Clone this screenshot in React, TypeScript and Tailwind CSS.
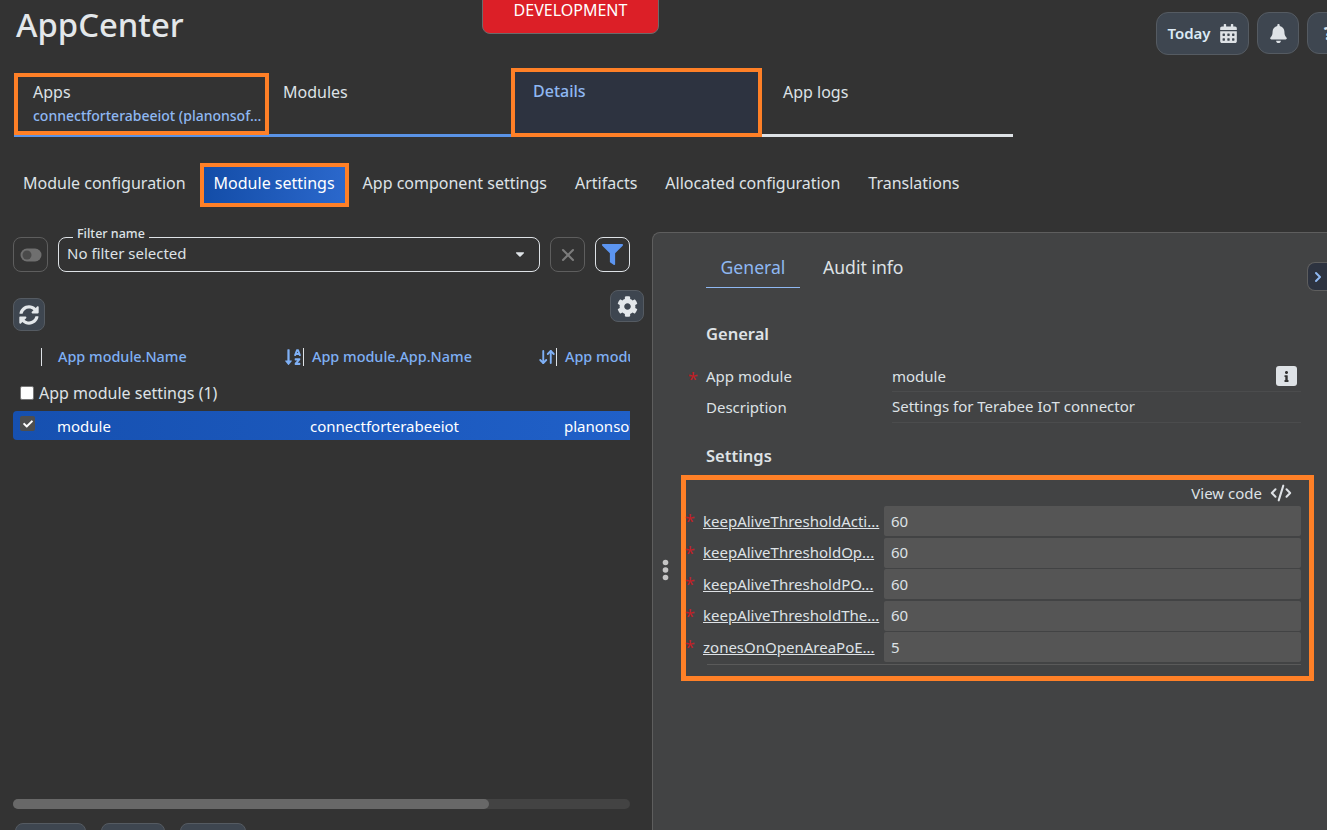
import React from 'react';
import { ArrowDownUp, ChevronRight, CodeXml, X } from 'lucide-react';
import { FaBell, FaCalendarAlt, FaCog, FaFilter, FaSyncAlt, FaInfo, FaCaretDown, FaCheck, FaSortAlphaDown } from 'react-icons/fa';

const settings = [
  { name: 'keepAliveThresholdActi...', value: '60' },
  { name: 'keepAliveThresholdOp...', value: '60' },
  { name: 'keepAliveThresholdPO...', value: '60' },
  { name: 'keepAliveThresholdThe...', value: '60' },
  { name: 'zonesOnOpenAreaPoE...', value: '5' },
];

const subTabs = ['App component settings', 'Artifacts', 'Allocated configuration', 'Translations'];

const App: React.FC = () => {
  return (
    <div className="relative h-[830px] w-[1327px] overflow-hidden bg-[#333333] font-['Noto_Sans',sans-serif] text-[#dee2e6]">
      {/* Environment badge */}
      <div className="absolute left-[482px] top-[-10px] flex h-[44px] w-[177px] items-end justify-center rounded-lg border border-[#6b6b6b] bg-[#dc1f27] pb-[13px] text-base leading-5 text-white">
        DEVELOPMENT
      </div>

      {/* Header */}
      <div className="flex h-[68px] items-start justify-between pl-4">
        <h1 className="mt-[3px] text-[32.8px] font-medium leading-[44px] text-[#e3e7ea]">AppCenter</h1>
        <div className="mr-[-22px] mt-3 flex items-start gap-2">
          <button className="flex h-[43px] w-[93px] items-center justify-center gap-2 rounded-xl border border-[#555b62] bg-[#3e4650] text-[15px] font-semibold text-[#dbeaf5]">
            Today
            <FaCalendarAlt size={19} color="#dee2e6" />
          </button>
          <button className="flex h-[42px] w-[42px] items-center justify-center rounded-xl border border-[#555b62] bg-[#3e4650]">
            <FaBell size={19} color="#dee2e6" />
          </button>
          <button className="flex h-[42px] w-[42px] items-center justify-center rounded-xl border border-[#555b62] bg-[#3e4650] text-lg font-bold text-[#dee2e6]">
            ?
          </button>
        </div>
      </div>

      {/* Main tabs */}
      <div className="ml-[14px] flex h-[69px] w-[999px] items-stretch">
        <div className="flex w-[497px] border-b-[3px] border-[#5a93e6]">
          <div className="mb-[-1px] mt-[5px] w-[255px] border-4 border-[#ff8027] pl-[15px] pt-[3px]">
            <div className="text-base leading-6 text-[#dee2e6]">Apps</div>
            <div className="whitespace-nowrap text-sm font-medium leading-[24px] text-[#8fb8f2]">connectforterabeeiot (planonsof...</div>
          </div>
          <div className="pl-[14px] pt-[12px] text-base leading-6 text-[#dee2e6]">Modules</div>
        </div>
        <div className="w-[251px] border-4 border-[#ff8027] bg-[#2d3340] px-[18px] pt-[7px] text-base font-medium leading-6 text-[#8fb8f2]">
          Details
        </div>
        <div className="flex-1 border-b-[3px] border-[#dee2e6] pl-[21px] pt-[12px] text-base leading-6 text-[#dee2e6]">
          App logs
        </div>
      </div>

      {/* Sub tabs */}
      <div className="ml-[23px] mt-[26px] flex h-[44px] items-center text-base text-[#dee2e6]">
        <span className="pb-1">Module configuration</span>
        <span className="ml-[14px] flex h-[44px] w-[149px] items-center justify-center border-4 border-[#ff8027] bg-gradient-to-r from-[#134da8] to-[#2b68cc] pb-1 text-white">
          Module settings
        </span>
        {subTabs.map((tab, i) => (
          <span key={tab} className={i === 0 ? 'ml-[14px] pb-1' : 'ml-[28px] pb-1'}>{tab}</span>
        ))}
      </div>

      <div className="mt-[25px] flex">
        {/* List column */}
        <div className="ml-[13px] flex w-[617px] flex-col">
          {/* Filter bar */}
          <div className="mt-[5px] flex w-[617px] items-start">
            <button className="flex h-[35px] w-[35px] items-center justify-center rounded-lg border border-[#5e5e5e]">
              <svg width="22" height="14" viewBox="0 0 22 14">
                <rect x="0.5" y="0.5" width="21" height="13" rx="6.5" fill="#6f6f6f" />
                <circle cx="7" cy="7" r="4.5" fill="#4a4a4a" />
              </svg>
            </button>
            <div className="relative ml-[10px] flex h-[35px] w-[482px] items-center justify-between rounded-lg border border-[#dee2e6] pb-[2px] pl-2 pr-[12px] text-[15px] text-[#dee2e6]">
              <span className="absolute left-[14px] top-[-12px] bg-[#333333] px-1 text-[12.5px] font-medium leading-4">Filter name</span>
              No filter selected
              <FaCaretDown size={14} />
            </div>
            <button className="ml-[10px] flex h-[35px] w-[35px] items-center justify-center rounded-lg border border-[#5e5e5e] text-[#7c7c7c]">
              <X size={20} strokeWidth={2.5} />
            </button>
            <button className="ml-[10px] flex h-[35px] w-[35px] items-center justify-center rounded-lg border border-[#dee2e6] text-[#5c95f0]">
              <FaFilter size={21} />
            </button>
          </div>

          {/* Toolbar */}
          <div className="flex h-[45px] w-[631px] items-start justify-between">
            <button className="mt-[26px] flex h-[33px] w-[32px] items-center justify-center rounded-lg border border-[#555b62] bg-[#3e4650] text-[#e3e7ea]">
              <FaSyncAlt size={20} />
            </button>
            <button className="mt-[18px] flex h-[32px] w-[34px] items-center justify-center rounded-lg border border-[#555b62] bg-[#3e4650] text-[#e3e7ea]">
              <FaCog size={21} />
            </button>
          </div>

          {/* Column headers */}
          <div className="mt-[28px] flex h-[24px] items-center overflow-hidden text-[14.4px] font-medium text-[#7fb0f5]">
            <span className="ml-[28px] h-[18px] w-px shrink-0 bg-[#dee2e6]" />
            <span className="ml-4 w-[226px] shrink-0 whitespace-nowrap">App module.Name</span>
            <FaSortAlphaDown size={18} className="shrink-0" />
            <span className="ml-px h-[18px] w-px shrink-0 bg-[#dee2e6]" />
            <span className="ml-2 w-[226px] shrink-0 whitespace-nowrap">App module.App.Name</span>
            <ArrowDownUp size={18} strokeWidth={2.5} className="shrink-0" />
            <span className="h-[18px] w-px shrink-0 bg-[#dee2e6]" />
            <span className="ml-2 whitespace-nowrap">App module</span>
          </div>

          {/* Group row */}
          <div className="mt-[12px] flex h-[24px] items-center pl-[7px] text-base text-[#dee2e6]">
            <span className="h-[14px] w-[14px] rounded-[2px] border border-[#767676] bg-white" />
            <span className="ml-[5px]">App module settings (1)</span>
          </div>

          {/* Selected row */}
          <div className="mt-[6px] flex h-[29px] items-center overflow-hidden rounded-l-sm bg-gradient-to-r from-[#1650b0] to-[#2060c8] pt-px text-[15px] text-white">
            <span className="mb-[5px] ml-[7px] flex h-[15px] w-[15px] shrink-0 items-center justify-center rounded-[2px] bg-[#4e4e4e]">
              <FaCheck size={10} />
            </span>
            <span className="ml-[22px] w-[253px] shrink-0">module</span>
            <span className="w-[254px] shrink-0">connectforterabeeiot</span>
            <span className="whitespace-nowrap">planonsoft</span>
          </div>

          {/* Horizontal scrollbar */}
          <div className="mt-[359px] h-[10px] rounded-full bg-[#434343]">
            <div className="h-full w-[476px] rounded-full bg-[#686868]" />
          </div>

          {/* Pager buttons, cut off by the window */}
          <div className="ml-[2px] mt-[14px] flex gap-[15px]">
            <div className="h-[20px] w-[71px] rounded-lg border border-[#555b62] bg-[#3e4650]" />
            <div className="h-[20px] w-[64px] rounded-lg border border-[#555b62] bg-[#3e4650]" />
            <div className="h-[20px] w-[66px] rounded-lg border border-[#555b62] bg-[#3e4650]" />
          </div>
        </div>

        {/* Details panel */}
        <div className="relative ml-[22px] h-[640px] flex-1 rounded-tl-lg border border-r-0 border-[#5e5e5e] bg-[#424344] pl-[53px] pr-[26px]">
          <button className="absolute right-0 top-[29px] flex h-[29px] w-[20px] items-center justify-center rounded-l-lg border border-r-0 border-[#5e5e5e] bg-[#2d3340] text-[#8fb8f2]">
            <ChevronRight size={16} strokeWidth={3} />
          </button>
          {/* Splitter handle */}
          <svg className="absolute left-[9px] top-[326px]" width="7" height="22" viewBox="0 0 7 22" fill="#c5c5c5">
            <circle cx="3.5" cy="3.5" r="2.8" />
            <circle cx="3.5" cy="11" r="2.8" />
            <circle cx="3.5" cy="18.5" r="2.8" />
          </svg>

          {/* Detail tabs */}
          <div className="mt-[14px] flex h-[41px] text-[17.6px]">
            <span className="w-[94px] border-b border-[#8fb8f2] text-center leading-[40px] text-[#8fb8f2]">General</span>
            <span className="ml-[23px] leading-[40px] text-[#dee2e6]">Audit info</span>
          </div>

          <h2 className="mt-[28px] text-[16.5px] font-semibold leading-[36px] text-[#dee2e6]">General</h2>

          <div className="mt-[8px] flex h-[32px] items-center text-[15px]">
            <span className="relative w-[186px]">
              <span className="absolute left-[-18px] top-0 text-lg text-[#c02026]">*</span>
              App module
            </span>
            <div className="flex h-full flex-1 items-center justify-between border-b border-[#4b4c4d] pr-[4px] pt-px">
              module
              <span className="flex h-[20px] w-[21px] items-center justify-center rounded-[3px] bg-[#dee2e6] text-[#333333]">
                <FaInfo size={11} />
              </span>
            </div>
          </div>
          <div className="mt-[-1px] flex h-[32px] items-center text-[15px]">
            <span className="w-[186px]">Description</span>
            <div className="flex h-full flex-1 items-center border-b border-[#4b4c4d]">Settings for Terabee IoT connector</div>
          </div>

          <h2 className="mt-[16px] text-[16.5px] font-semibold leading-[34px] text-[#dee2e6]">Settings</h2>

          {/* Settings box */}
          <div className="ml-[-25px] mr-[-13px] mt-[2px] h-[206px] border-[5px] border-[#ff8027] pl-[17px] pr-[8px]">
            <div className="flex h-[26px] items-center justify-end gap-[8px] pr-[9px] text-[15px]">
              View code
              <CodeXml size={22} strokeWidth={2.25} />
            </div>
            {settings.map((row) => (
              <div key={row.name} className="mb-[1.5px] flex h-[30px] text-[15px]">
                <span className="relative flex w-[181px] items-center whitespace-nowrap underline">
                  <span className="absolute left-[-18px] top-[1px] text-lg text-[#c02026] no-underline">*</span>
                  {row.name}
                </span>
                <div className="flex flex-1 items-center rounded-[2px] bg-[#555555] pl-[7px]">{row.value}</div>
              </div>
            ))}
            <div className="ml-[4px] h-px bg-[#5a5a5a]" />
          </div>
        </div>
      </div>
    </div>
  );
};

export default App;
